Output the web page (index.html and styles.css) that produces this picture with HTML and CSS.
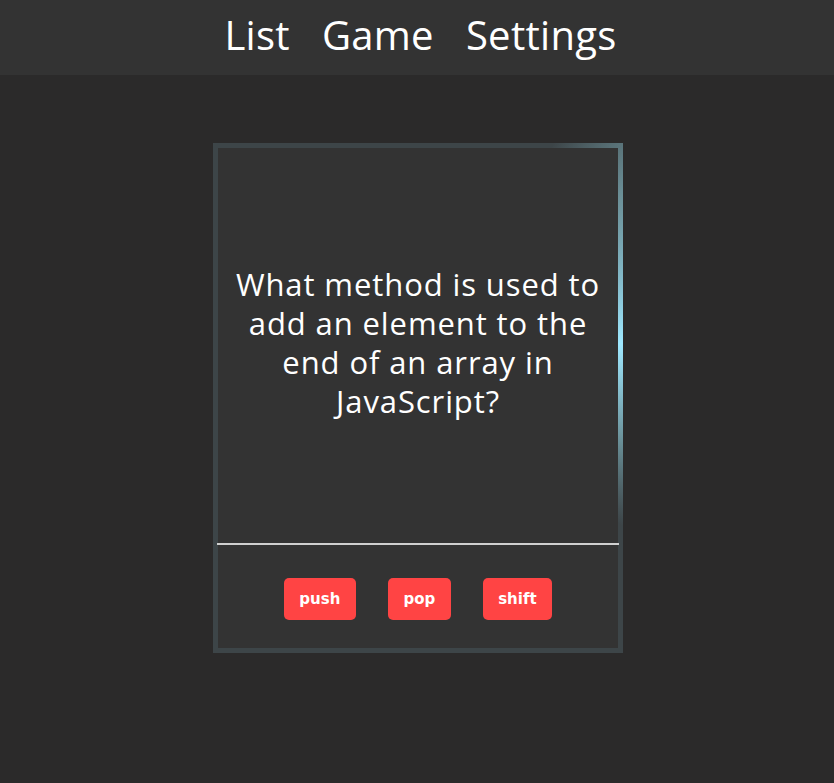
FILE: index.html
```html
<!DOCTYPE html>
<html lang="en">
<head>
<meta charset="utf-8">
<link rel="stylesheet" href="styles.css">
</head>
<body>
<header class="topbar">
  <nav class="nav">
    <a class="nav-link" href="#">List</a>
    <a class="nav-link" href="#">Game</a>
    <a class="nav-link" href="#">Settings</a>
  </nav>
</header>
<main class="main">
  <div class="card">
    <div class="card-inner">
      <div class="question">What method is used to add an element to the end of an array in JavaScript?</div>
      <div class="divider"></div>
      <div class="answers">
        <button class="answer">push</button>
        <button class="answer">pop</button>
        <button class="answer">shift</button>
      </div>
    </div>
  </div>
</main>
</body>
</html>
```

FILE: styles.css
```css
html, body {
  margin: 0;
  padding: 0;
}
body {
  background: #2b2a2a;
  font-family: "Open Sans", "DejaVu Sans", sans-serif;
  color: #fff;
  height: 783px;
}
.topbar {
  height: 75px;
  background: #333333;
  display: flex;
  align-items: flex-start;
  justify-content: center;
}
.nav {
  display: flex;
  gap: 32px;
  padding-left: 7px;
}
.nav-link {
  color: #fff;
  text-decoration: none;
  font-size: 40px;
  letter-spacing: 0.3px;
  line-height: 69px;
}
.main {
  display: flex;
  justify-content: center;
  padding-top: 68px;
  padding-left: 2px;
}
.card {
  width: 410px;
  height: 510px;
  box-sizing: border-box;
  padding: 5px;
  background: conic-gradient(from 0deg at 50% 50%,
    #3d4548 0deg, #3d4548 28deg, #6b8f97 45deg, #9ee8ff 75deg,
    #6e97a0 100deg, #3d4548 122deg, #3d4548 360deg);
}
.card-inner {
  height: 100%;
  background: #333333;
  display: flex;
  flex-direction: column;
}
.question {
  flex: 0 0 395px;
  display: flex;
  align-items: center;
  justify-content: center;
  text-align: center;
  font-size: 31px;
  letter-spacing: 0.9px;
  line-height: 39px;
  padding: 0 14px 6px;
  box-sizing: border-box;
}
.divider {
  height: 2px;
  background: #d0d0d0;
  margin: 0 -1px;
}
.answers {
  flex: 1;
  display: flex;
  justify-content: center;
  align-items: center;
  gap: 32px;
  padding-top: 5px;
}
.answer {
  border: none;
  background: #ff4444;
  color: #fff;
  font-family: "DejaVu Sans", Verdana, sans-serif;
  font-weight: bold;
  font-size: 15px;
  height: 42px;
  padding: 0 15.5px;
  border-radius: 5px;
}
```
